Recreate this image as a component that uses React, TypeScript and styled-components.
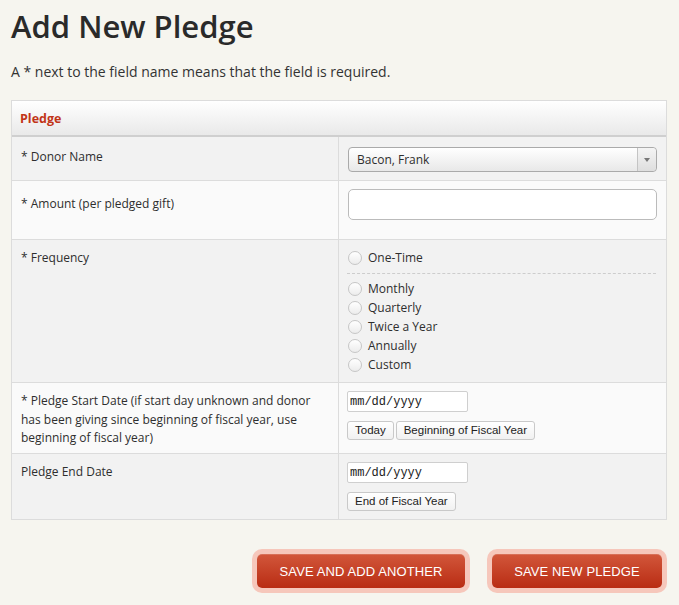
import React from 'react';
import styled, { createGlobalStyle } from 'styled-components';

const GlobalStyle = createGlobalStyle`
  html, body {
    margin: 0;
    padding: 0;
    background: #f6f5ef;
  }
  body {
    font-family: "Open Sans", "Liberation Sans", Arial, sans-serif;
    color: #333;
  }
`;

const Page = styled.div`
  padding: 0 12px 12px 11px;
`;

const Title = styled.h1`
  margin: 0;
  padding-top: 5px;
  font-size: 31px;
  line-height: 42px;
  font-weight: 600;
  color: #2a2a2a;
`;

const Intro = styled.p`
  margin: 15px 0 18px;
  font-size: 14px;
  line-height: 20px;
  color: #333;
`;

const Table = styled.div`
  border: 1px solid #dcdcdc;
  display: grid;
  grid-template-columns: 327px 1fr;
`;

const Header = styled.div`
  grid-column: 1 / -1;
  height: 34px;
  padding: 0 8px;
  display: flex;
  align-items: center;
  background: linear-gradient(#ffffff, #e9e9e9);
  border-bottom: 2px solid #cfcfcf;
  color: #c13518;
  font-weight: 700;
  font-size: 12.5px;
`;

const LabelCell = styled.div<{ $alt: boolean; $first?: boolean; $top?: number }>`
  padding: ${({ $top }) => $top ?? 9}px 9px 5.5px;
  background: ${({ $alt }) => ($alt ? '#fafafa' : '#f2f2f2')};
  border-right: 1px solid #dcdcdc;
  border-top: ${({ $first }) => ($first ? 'none' : '1px solid #dcdcdc')};
  font-size: 12px;
  line-height: 18.5px;
  color: #2e2e2e;
`;

const FieldCell = styled.div<{ $alt: boolean; $first?: boolean }>`
  padding: ${({ $first }) => ($first ? '10px' : '8px')} 9px 8px 9px;
  background: ${({ $alt }) => ($alt ? '#fafafa' : '#f2f2f2')};
  border-top: ${({ $first }) => ($first ? 'none' : '1px solid #dcdcdc')};
  display: flex;
  flex-direction: column;
  align-items: flex-start;
`;

const Select = styled.div`
  box-sizing: border-box;
  width: 100%;
  height: 25px;
  border: 1px solid #aaa;
  border-radius: 4px;
  background: linear-gradient(#ffffff, #e8e8e8);
  display: flex;
  align-items: stretch;
  font-size: 12px;
  color: #2e2e2e;
`;

const SelectText = styled.span`
  flex: 1;
  display: flex;
  align-items: center;
  padding-left: 8px;
`;

const SelectArrow = styled.span`
  width: 18px;
  border-left: 1px solid #c4c4c4;
  display: flex;
  align-items: center;
  justify-content: center;
  border-radius: 0 4px 4px 0;
  background: linear-gradient(#f4f4f4, #dedede);

  &::after {
    content: '';
    border-left: 3px solid transparent;
    border-right: 3px solid transparent;
    border-top: 4px solid #777;
  }
`;

const TextInput = styled.input`
  box-sizing: border-box;
  width: 100%;
  height: 31px;
  margin: 0 0 11px;
  border: 1px solid #bbb;
  border-radius: 5px;
  background: #fff;
  font: 12px "Open Sans", sans-serif;
  padding: 0 8px;
`;

const RadioGroup = styled.div`
  width: 100%;
  display: flex;
  flex-direction: column;
`;

const RadioRow = styled.label`
  display: flex;
  align-items: center;
  gap: 6px;
  height: 19px;
  font-size: 12px;
  color: #2e2e2e;
`;

const Radio = styled.span`
  box-sizing: border-box;
  width: 14px;
  height: 14px;
  border-radius: 50%;
  border: 1px solid #c6c6c6;
  background: linear-gradient(#ffffff, #ececec);
`;

const Divider = styled.hr`
  width: 100%;
  margin: 6px 0 5px -1px;
  border: none;
  border-top: 1px dashed #cdcdcd;
`;

const DateInput = styled.input`
  box-sizing: border-box;
  width: 121px;
  height: 21px;
  margin: 0 0 9px -1px;
  border: 1px solid #cfcfcf;
  border-radius: 2px;
  background: #fff;
  padding: 0 2px;
  font: 12px "Liberation Mono", "DejaVu Sans Mono", monospace;
  color: #222;

  &::placeholder {
    color: #222;
  }
`;

const SmallButtons = styled.div`
  display: flex;
  gap: 2px;
  margin-left: -1px;
`;

const SmallButton = styled.button`
  height: 19px;
  padding: 0 7px;
  border: 1px solid #c9c9c9;
  border-radius: 3px;
  background: linear-gradient(#ffffff, #f1f1f1);
  font: 11.5px "Liberation Sans", Arial, sans-serif;
  color: #222;
  line-height: 17px;
`;

const Actions = styled.div`
  display: flex;
  justify-content: flex-end;
  gap: 27px;
  margin-top: 34px;
  padding-right: 5px;
`;

const RedButton = styled.button<{ $width: number }>`
  width: ${({ $width }) => $width}px;
  height: 34px;
  border: none;
  border-radius: 5px;
  background: linear-gradient(#d2573b, #b92c13);
  box-shadow: 0 0 0 5px #f6c7bb, inset 0 1px 0 rgba(255, 255, 255, 0.15);
  color: #fff;
  font: 13px "Liberation Sans", Arial, sans-serif;
  letter-spacing: 0.1px;
  text-transform: uppercase;
`;

const frequencies = ['Monthly', 'Quarterly', 'Twice a Year', 'Annually', 'Custom'];

export default function App() {
  return (
    <Page>
      <GlobalStyle />
      <Title>Add New Pledge</Title>
      <Intro>A * next to the field name means that the field is required.</Intro>
      <Table>
        <Header>Pledge</Header>

        <LabelCell $alt={false} $first $top={11}>* Donor Name</LabelCell>
        <FieldCell $alt={false} $first>
          <Select>
            <SelectText>Bacon, Frank</SelectText>
            <SelectArrow />
          </Select>
        </FieldCell>

        <LabelCell $alt $top={14}>* Amount (per pledged gift)</LabelCell>
        <FieldCell $alt>
          <TextInput type="text" />
        </FieldCell>

        <LabelCell $alt={false}>* Frequency</LabelCell>
        <FieldCell $alt={false}>
          <RadioGroup>
            <RadioRow>
              <Radio />
              One-Time
            </RadioRow>
            <Divider />
            {frequencies.map((f) => (
              <RadioRow key={f}>
                <Radio />
                {f}
              </RadioRow>
            ))}
          </RadioGroup>
        </FieldCell>

        <LabelCell $alt>
          * Pledge Start Date (if start day unknown and donor has been giving since beginning of fiscal
          year, use beginning of fiscal year)
        </LabelCell>
        <FieldCell $alt>
          <DateInput placeholder="mm/dd/yyyy" />
          <SmallButtons>
            <SmallButton>Today</SmallButton>
            <SmallButton>Beginning of Fiscal Year</SmallButton>
          </SmallButtons>
        </FieldCell>

        <LabelCell $alt={false}>Pledge End Date</LabelCell>
        <FieldCell $alt={false}>
          <DateInput placeholder="mm/dd/yyyy" />
          <SmallButtons>
            <SmallButton>End of Fiscal Year</SmallButton>
          </SmallButtons>
        </FieldCell>
      </Table>
      <Actions>
        <RedButton $width={208}>Save and Add Another</RedButton>
        <RedButton $width={170}>Save New Pledge</RedButton>
      </Actions>
    </Page>
  );
}
